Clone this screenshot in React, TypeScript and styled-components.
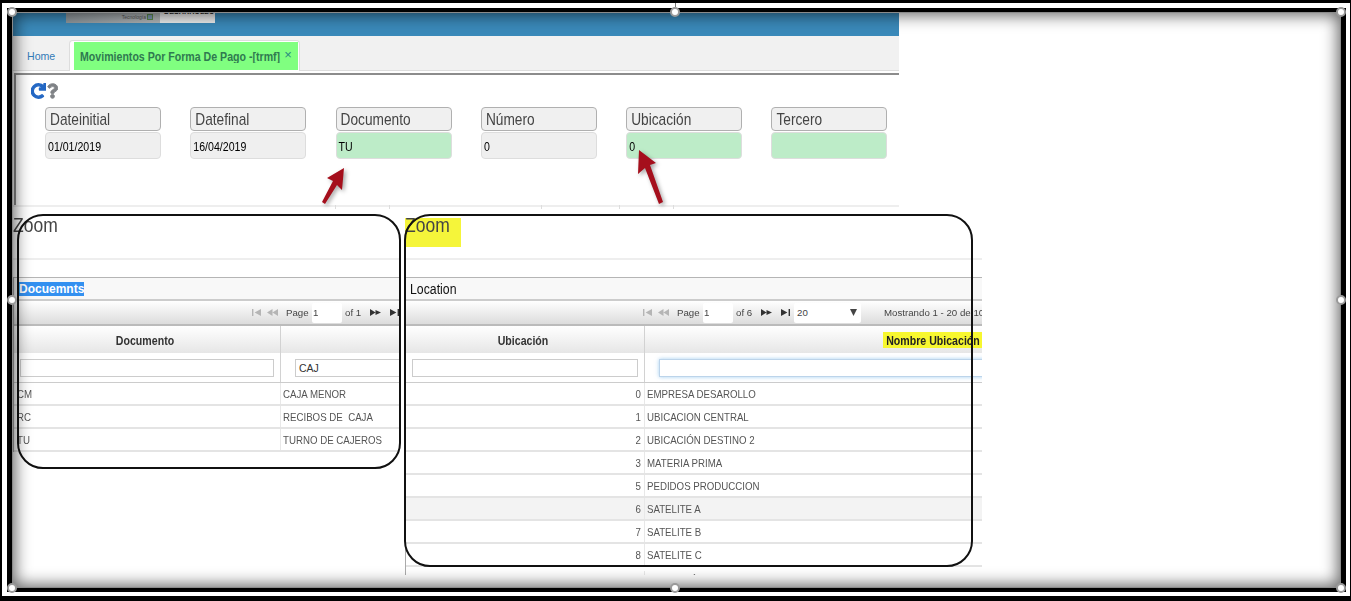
import React from 'react';
import styled, { createGlobalStyle } from 'styled-components';
import { FaRedo, FaQuestion } from 'react-icons/fa';

const GlobalStyle = createGlobalStyle`
  html, body {
    margin: 0;
    padding: 0;
    background: #fff;
    font-family: "Liberation Sans", Arial, sans-serif;
  }
`;

const OuterFrame = styled.div`
  box-sizing: border-box;
  width: 1351px;
  height: 601px;
  overflow: hidden;
  background: #fff;
  border-style: solid;
  border-color: #000;
  border-width: 3px 1px 5px 2px;
  padding: 5px 4px 4px 5px;
`;

const InnerFrame = styled.div`
  border-style: solid;
  border-color: #000;
  border-width: 4px 5px 4px 5px;
`;

const Stage = styled.div`
  position: relative;
  width: 1329px;
  height: 576px;
`;

const Canvas = styled.div`
  position: relative;
  width: 100%;
  height: 100%;
  overflow: hidden;
  background: #fff;
`;

const Blurred = styled.div`
  filter: blur(0.45px);
`;

const EdgeShadow = styled.div`
  position: absolute;
  inset: 0;
  z-index: 3;
  pointer-events: none;
  box-shadow: inset 0 0 0 1px #8a8a8a, inset 0 0 16px 3px rgba(0, 0, 0, 0.62);
`;

const Handle = styled.span<{ $x: string; $y: string; $stem?: boolean }>`
  position: absolute;
  z-index: 4;
  left: ${(p) => p.$x};
  top: ${(p) => p.$y};
  box-sizing: border-box;
  width: 10px;
  height: 10px;
  margin: -5px 0 0 -5px;
  border: 2px solid #9a9a9a;
  border-radius: 50%;
  background: #fff;

  &::before {
    content: '';
    display: ${(p) => (p.$stem ? 'block' : 'none')};
    position: absolute;
    left: 3px;
    top: -11px;
    width: 1px;
    height: 9px;
    background: #777;
  }
`;

const AppColumn = styled.div`
  width: 887px;
`;

const TopHeader = styled.header`
  display: flex;
  height: 24px;
  padding-left: 54px;
  background: #3a89b9;
`;

const LogoBox = styled.div`
  display: flex;
  height: 11px;
  overflow: hidden;
`;

const LogoGray = styled.div`
  display: flex;
  justify-content: flex-end;
  align-items: flex-start;
  gap: 1px;
  box-sizing: border-box;
  width: 94px;
  padding: 2px 7px 0 0;
  background: linear-gradient(90deg, #8f979c, #b4b8ba);
  color: #555;
  font-size: 5px;
  line-height: 7px;
`;

const LogoMark = styled.span`
  box-sizing: border-box;
  width: 6px;
  height: 6px;
  background: #7d9ab5;
  border: 1px solid #5c8a4c;
`;

const LogoWhite = styled.div`
  box-sizing: border-box;
  width: 55px;
  padding-left: 4px;
  background: #eee;
  color: #222;
  font-size: 7.2px;
  font-weight: bold;
  line-height: 7px;
  white-space: nowrap;

  span {
    display: block;
    margin-top: -4px;
  }
`;

const TabBar = styled.nav`
  display: flex;
  align-items: flex-end;
  box-sizing: border-box;
  height: 35px;
  padding-left: 15px;
  background: #f1f1f1;
  border-bottom: 1px solid #ddd;
`;

const HomeLink = styled.a`
  width: 42px;
  margin-bottom: 8px;
  color: #337ab7;
  font-size: 10.6px;
`;

const ActiveTab = styled.div`
  display: flex;
  align-items: center;
  box-sizing: border-box;
  width: 231px;
  height: 31px;
  margin-bottom: -1px;
  padding: 1px 1px 1px 4px;
  background: #fff;
  border: 1px solid #ddd;
  border-bottom: none;
  border-radius: 4px 4px 0 0;
`;

const ActiveTabInner = styled.div`
  display: flex;
  align-items: center;
  gap: 4px;
  flex: 1;
  height: 100%;
  padding-left: 6px;
  background: #80ff80;
  color: #2f7a50;
  font-size: 10.6px;
  font-weight: bold;
  white-space: nowrap;
`;

const TabClose = styled.span`
  margin-top: -3px;
  color: #2a8a80;
  font-size: 13px;
  font-weight: normal;
`;

const FormPanel = styled.section`
  box-sizing: border-box;
  height: 132px;
  margin: 2px 0 0 2px;
  padding: 7px 0 0 15px;
  border-top: 2px solid #8c8c8c;
  border-left: 2px solid #8c8c8c;
`;

const ToolIcons = styled.div`
  display: flex;
  align-items: center;
  gap: 1px;
  height: 18px;
`;

const RefreshIcon = styled(FaRedo)`
  width: 15px;
  height: 16px;
  color: #2468c4;
  stroke: currentColor;
  stroke-width: 45;
`;

const HelpIcon = styled(FaQuestion)`
  width: 11px;
  height: 18px;
  color: #7f8286;
  stroke: currentColor;
  stroke-width: 30;
`;

const FieldGrid = styled.div`
  display: grid;
  grid-template-columns: repeat(6, 116px);
  column-gap: 29.3px;
  margin-top: 7px;
  margin-left: 14px;
`;

const Field = styled.div`
  display: flex;
  flex-direction: column;
  gap: 1px;
`;

const FieldLabel = styled.div`
  display: flex;
  align-items: center;
  box-sizing: border-box;
  height: 24px;
  padding-left: 4px;
  background: #f0f0f0;
  border: 1px solid #b0b0b0;
  border-radius: 4px;
  color: #444;
  font-size: 13.7px;
`;

const TallText = styled.span`
  display: inline-block;
  transform: scaleY(1.15);
`;

const FieldValue = styled.div<{ $editable?: boolean }>`
  display: flex;
  align-items: center;
  box-sizing: border-box;
  height: 27px;
  padding-left: 2px;
  background: ${(p) => (p.$editable ? '#bdecc8' : '#efefef')};
  border: 1px solid #ddd;
  border-radius: 4px;
  color: #000;
  font-size: 10.6px;
`;

const RuleRow = styled.div`
  display: grid;
  grid-template-columns: 323px 54px 152px 78px 54px 1fr;
  height: 2px;
  margin-left: 1px;
  background: #eee;
`;

const RuleCell = styled.div`
  height: 4px;
  border-right: 1px solid #ddd;

  &:last-child {
    border-right: none;
  }
`;

const ZoomRow = styled.div`
  display: flex;
  gap: 5px;
  padding-left: 1px;
`;

const ZoomPanel = styled.section<{ $width: number; $height: number }>`
  position: relative;
  width: ${(p) => p.$width}px;
  height: ${(p) => p.$height}px;
`;

const PanelClip = styled.div`
  height: 100%;
  overflow: hidden;
`;

const ZoomTitleRow = styled.div`
  height: 51px;
  border-bottom: 2px solid #eee;
`;

const ZoomTitle = styled.div<{ $marked?: boolean }>`
  display: inline-block;
  box-sizing: border-box;
  width: 56px;
  height: 29px;
  margin-top: 11px;
  background: ${(p) => (p.$marked ? '#f5f53a' : 'transparent')};
  color: #444;
  font-size: 17.5px;
  line-height: 15px;
`;

const Grid = styled.div`
  margin-top: 17px;
  border-left: 1px solid #aaa;
`;

const GridCaption = styled.div`
  display: flex;
  align-items: center;
  box-sizing: border-box;
  height: 24px;
  padding-left: 5px;
  background: #f8f8f8;
  border-top: 1px solid #b5b5b5;
  border-bottom: 2px solid #ccc;
  color: #333;
  font-size: 12px;
  font-weight: bold;
`;

const Selected = styled.span`
  background: #3390f0;
  color: #fff;
`;

const PlainCaption = styled.span`
  margin-left: -1px;
  font-weight: normal;
  font-size: 12.3px;
  color: #111;
`;

const Pager = styled.div<{ $start: number }>`
  display: flex;
  align-items: center;
  box-sizing: border-box;
  height: 25px;
  padding-left: ${(p) => p.$start}px;
  background: linear-gradient(#fff, #dcdcdc);
  border-bottom: 2px solid #bbb;
  color: #444;
  font-size: 9.7px;
  white-space: nowrap;
`;

const PagerIcon = styled.svg<{ $off?: boolean; $gap: number }>`
  flex: none;
  width: 11px;
  height: 7px;
  margin-right: ${(p) => p.$gap}px;
  fill: ${(p) => (p.$off ? '#b5b5b5' : '#333')};
`;

const PageLabel = styled.span`
  flex: none;
  width: 23px;
`;

const PageInput = styled.div`
  display: flex;
  flex: none;
  align-items: center;
  box-sizing: border-box;
  width: 30px;
  height: 20px;
  margin: 0 3px;
  padding-left: 1px;
  background: #fff;
  border-radius: 2px;
`;

const PageCount = styled.span`
  flex: none;
  width: 16px;
  margin-right: 9px;
`;

const PageSelect = styled.div`
  display: flex;
  flex: none;
  justify-content: space-between;
  align-items: center;
  box-sizing: border-box;
  width: 67px;
  height: 20px;
  margin-right: 23px;
  padding: 0 4px 0 3px;
  background: #fff;
  border-radius: 2px;
`;

const SelectArrow = styled.svg`
  width: 7px;
  height: 7px;
  fill: #444;
`;

const GridRow = styled.div<{ $cols: string; $height: number; $shade?: boolean; $cut?: boolean }>`
  display: grid;
  grid-template-columns: ${(p) => p.$cols};
  box-sizing: border-box;
  height: ${(p) => p.$height}px;
  padding-top: ${(p) => (p.$cut ? 4 : 0)}px;
  background: ${(p) => (p.$shade ? '#f3f3f3' : 'transparent')};
  border-bottom: 2px solid #e4e4e4;
`;

const HeadRow = styled(GridRow)`
  background: linear-gradient(#fff, #e6e6e6);
  border-bottom: none;
`;

const FilterRow = styled(GridRow)`
  border-bottom: 1px solid #ccc;
`;

const HeadCell = styled.div`
  display: flex;
  justify-content: center;
  align-items: center;
  padding-right: 4px;
  border-right: 1px solid #d2d2d2;
  color: #333;
  font-size: 10.6px;
  font-weight: bold;
`;

const Marker = styled.span`
  padding: 2px 2px 2px 3px;
  background: #f7f72f;
  color: #222;
`;

const FilterCell = styled.div<{ $indent: number }>`
  display: flex;
  align-items: center;
  padding: 0 6px 0 ${(p) => p.$indent}px;
  border-right: 1px solid #d2d2d2;
`;

const FilterInput = styled.div<{ $focus?: boolean }>`
  display: flex;
  align-items: center;
  box-sizing: border-box;
  flex: 1;
  height: 18px;
  padding-left: 3px;
  background: #fff;
  border: 1px solid ${(p) => (p.$focus ? '#bcd4ea' : '#ccc')};
  box-shadow: ${(p) => (p.$focus ? '0 0 4px rgba(102, 175, 233, 0.6)' : 'none')};
  color: #333;
  font-size: 10.5px;
`;

const Cell = styled.div<{ $right?: boolean }>`
  display: flex;
  align-items: center;
  justify-content: ${(p) => (p.$right ? 'flex-end' : 'flex-start')};
  padding: 0 3px 1px 2px;
  border-right: 1px solid #e8e8e8;
  color: #555;
  font-size: 9.7px;
  white-space: pre;
`;

const LeftCode = styled(Cell)`
  padding-left: 3px;
`;

const RoundedOutline = styled.div<{ $left: number; $width: number; $height: number }>`
  position: absolute;
  z-index: 2;
  left: ${(p) => p.$left}px;
  top: 7px;
  box-sizing: border-box;
  width: ${(p) => p.$width}px;
  height: ${(p) => p.$height}px;
  border: 2px solid #111;
  border-radius: 26px;
  pointer-events: none;
`;

const Arrow = styled.svg<{ $left: number; $top: number }>`
  position: absolute;
  z-index: 2;
  left: ${(p) => p.$left}px;
  top: ${(p) => p.$top}px;
  width: 40px;
  height: 64px;
  overflow: visible;
  filter: drop-shadow(2px 2px 2px rgba(0, 0, 0, 0.35));
`;

const fields = [
  { label: 'Dateinitial', value: '01/01/2019' },
  { label: 'Datefinal', value: '16/04/2019' },
  { label: 'Documento', value: 'TU', editable: true },
  { label: 'Número', value: '0' },
  { label: 'Ubicación', value: '0', editable: true },
  { label: 'Tercero', value: '', editable: true },
];

const documents = [
  { code: 'CM', name: 'CAJA MENOR' },
  { code: 'RC', name: 'RECIBOS DE  CAJA' },
  { code: 'TU', name: 'TURNO DE CAJEROS' },
];

// the last row is cut by the bottom of the grid, only its accent still shows
const locations = [
  { code: '0', name: 'EMPRESA DESAROLLO' },
  { code: '1', name: 'UBICACION CENTRAL' },
  { code: '2', name: 'UBICACIÓN DESTINO 2' },
  { code: '3', name: 'MATERIA PRIMA' },
  { code: '5', name: 'PEDIDOS PRODUCCION' },
  { code: '6', name: 'SATELITE A', shade: true },
  { code: '7', name: 'SATELITE B' },
  { code: '8', name: 'SATELITE C' },
  { code: '9', name: 'BODEGA ÚNICA', cut: true },
];

const handles: { x: string; y: string; stem?: boolean }[] = [
  { x: '0', y: '0' },
  { x: '663px', y: '0', stem: true },
  { x: '100%', y: '0' },
  { x: '0', y: '288px' },
  { x: '100%', y: '288px' },
  { x: '0', y: '100%' },
  { x: '663px', y: '100%' },
  { x: '100%', y: '100%' },
];

const FirstIcon: React.FC<{ off?: boolean; gap: number }> = ({ off, gap }) => (
  <PagerIcon viewBox="0 0 11 7" $off={off} $gap={gap}>
    <path d="M1 0h1.4v7H1zM10 0v7L3.6 3.5z" />
  </PagerIcon>
);

const PrevIcon: React.FC<{ off?: boolean; gap: number }> = ({ off, gap }) => (
  <PagerIcon viewBox="0 0 11 7" $off={off} $gap={gap}>
    <path d="M5.5 0v7L0 3.5zM11 0v7L5.5 3.5z" />
  </PagerIcon>
);

const NextIcon: React.FC<{ gap: number }> = ({ gap }) => (
  <PagerIcon viewBox="0 0 11 7" $gap={gap}>
    <path d="M0 0v7l5.5-3.5zM5.5 1v5L11 3.5z" />
  </PagerIcon>
);

const LastIcon: React.FC<{ gap: number }> = ({ gap }) => (
  <PagerIcon viewBox="0 0 11 7" $gap={gap}>
    <path d="M1 0v7l6.4-3.5zM8.6 0H10v7H8.6z" />
  </PagerIcon>
);

const App: React.FC = () => {
  return (
    <>
      <GlobalStyle />
      <OuterFrame>
        <InnerFrame>
          <Stage>
            <Canvas>
              <Blurred>
                <AppColumn>
                  <TopHeader>
                    <LogoBox>
                      <LogoGray>
                        Tecnología
                        <LogoMark />
                      </LogoGray>
                      <LogoWhite>
                        <span>DESARROLLO</span>
                      </LogoWhite>
                    </LogoBox>
                  </TopHeader>
                  <TabBar>
                    <HomeLink>Home</HomeLink>
                    <ActiveTab>
                      <ActiveTabInner>
                        <TallText>Movimientos Por Forma De Pago -[trmf]</TallText>
                        <TabClose>×</TabClose>
                      </ActiveTabInner>
                    </ActiveTab>
                  </TabBar>
                  <FormPanel>
                    <ToolIcons>
                      <RefreshIcon />
                      <HelpIcon />
                    </ToolIcons>
                    <FieldGrid>
                      {fields.map(({ label, value, editable }) => (
                        <Field key={label}>
                          <FieldLabel>
                            <TallText>{label}</TallText>
                          </FieldLabel>
                          <FieldValue $editable={editable}>
                            <TallText>{value}</TallText>
                          </FieldValue>
                        </Field>
                      ))}
                    </FieldGrid>
                  </FormPanel>
                  <RuleRow>
                    <RuleCell />
                    <RuleCell />
                    <RuleCell />
                    <RuleCell />
                    <RuleCell />
                    <RuleCell />
                  </RuleRow>
                </AppColumn>
                <ZoomRow>
                  <ZoomPanel $width={387} $height={368}>
                    <PanelClip>
                      <ZoomTitleRow>
                        <ZoomTitle>
                          <TallText>Zoom</TallText>
                        </ZoomTitle>
                      </ZoomTitleRow>
                      <Grid>
                        <GridCaption>
                          <Selected>Docuemnts</Selected>
                        </GridCaption>
                        <Pager $start={237}>
                          <FirstIcon off gap={5} />
                          <PrevIcon off gap={8} />
                          <PageLabel>Page</PageLabel>
                          <PageInput>1</PageInput>
                          <PageCount>of 1</PageCount>
                          <NextIcon gap={8} />
                          <LastIcon gap={0} />
                        </Pager>
                        <HeadRow $cols="267px 300px" $height={27}>
                          <HeadCell>
                            <TallText>Documento</TallText>
                          </HeadCell>
                          <HeadCell />
                        </HeadRow>
                        <FilterRow $cols="267px 300px" $height={30}>
                          <FilterCell $indent={6}>
                            <FilterInput />
                          </FilterCell>
                          <FilterCell $indent={14}>
                            <FilterInput>CAJ</FilterInput>
                          </FilterCell>
                        </FilterRow>
                        {documents.map(({ code, name }) => (
                          <GridRow key={code} $cols="267px 300px" $height={23}>
                            <LeftCode>
                              <TallText>{code}</TallText>
                            </LeftCode>
                            <Cell>
                              <TallText>{name}</TallText>
                            </Cell>
                          </GridRow>
                        ))}
                      </Grid>
                    </PanelClip>
                    <RoundedOutline $left={4} $width={384} $height={255} />
                  </ZoomPanel>
                  <ZoomPanel $width={577} $height={368}>
                    <PanelClip>
                      <ZoomTitleRow>
                        <ZoomTitle $marked>
                          <TallText>Zoom</TallText>
                        </ZoomTitle>
                      </ZoomTitleRow>
                      <Grid>
                        <GridCaption>
                          <PlainCaption>
                            <TallText>Location</TallText>
                          </PlainCaption>
                        </GridCaption>
                        <Pager $start={236}>
                          <FirstIcon off gap={5} />
                          <PrevIcon off gap={8} />
                          <PageLabel>Page</PageLabel>
                          <PageInput>1</PageInput>
                          <PageCount>of 6</PageCount>
                          <NextIcon gap={8} />
                          <LastIcon gap={3} />
                          <PageSelect>
                            20
                            <SelectArrow viewBox="0 0 7 7">
                              <path d="M0 0h7L3.5 7z" />
                            </SelectArrow>
                          </PageSelect>
                          Mostrando 1 - 20 de 100
                        </Pager>
                        <HeadRow $cols="239px 580px" $height={27}>
                          <HeadCell>
                            <TallText>Ubicación</TallText>
                          </HeadCell>
                          <HeadCell>
                            <Marker>
                              <TallText>Nombre Ubicación</TallText>
                            </Marker>
                          </HeadCell>
                        </HeadRow>
                        <FilterRow $cols="239px 580px" $height={30}>
                          <FilterCell $indent={6}>
                            <FilterInput />
                          </FilterCell>
                          <FilterCell $indent={14}>
                            <FilterInput $focus />
                          </FilterCell>
                        </FilterRow>
                        {locations.map(({ code, name, shade, cut }) => (
                          <GridRow key={code} $cols="239px 580px" $height={23} $shade={shade} $cut={cut}>
                            <Cell $right>
                              <TallText>{code}</TallText>
                            </Cell>
                            <Cell>
                              <TallText>{name}</TallText>
                            </Cell>
                          </GridRow>
                        ))}
                      </Grid>
                    </PanelClip>
                    <RoundedOutline $left={-1} $width={569} $height={353} />
                  </ZoomPanel>
                </ZoomRow>
              </Blurred>
              <Arrow $left={308} $top={155} viewBox="0 0 40 64">
                <path d="M24 1 L7 11 L13 14 L2 35 L5 37 L17 18 L22 23 Z" fill="#a50f1c" />
              </Arrow>
              <Arrow $left={624} $top={138} viewBox="0 0 40 64">
                <path d="M3 0 L20 13 L14 15 L27 52 L23 54 L9 18 L2 24 Z" fill="#a50f1c" />
              </Arrow>
              <EdgeShadow />
            </Canvas>
            {handles.map(({ x, y, stem }) => (
              <Handle key={`${x}-${y}`} $x={x} $y={y} $stem={stem} />
            ))}
          </Stage>
        </InnerFrame>
      </OuterFrame>
    </>
  );
};

export default App;
